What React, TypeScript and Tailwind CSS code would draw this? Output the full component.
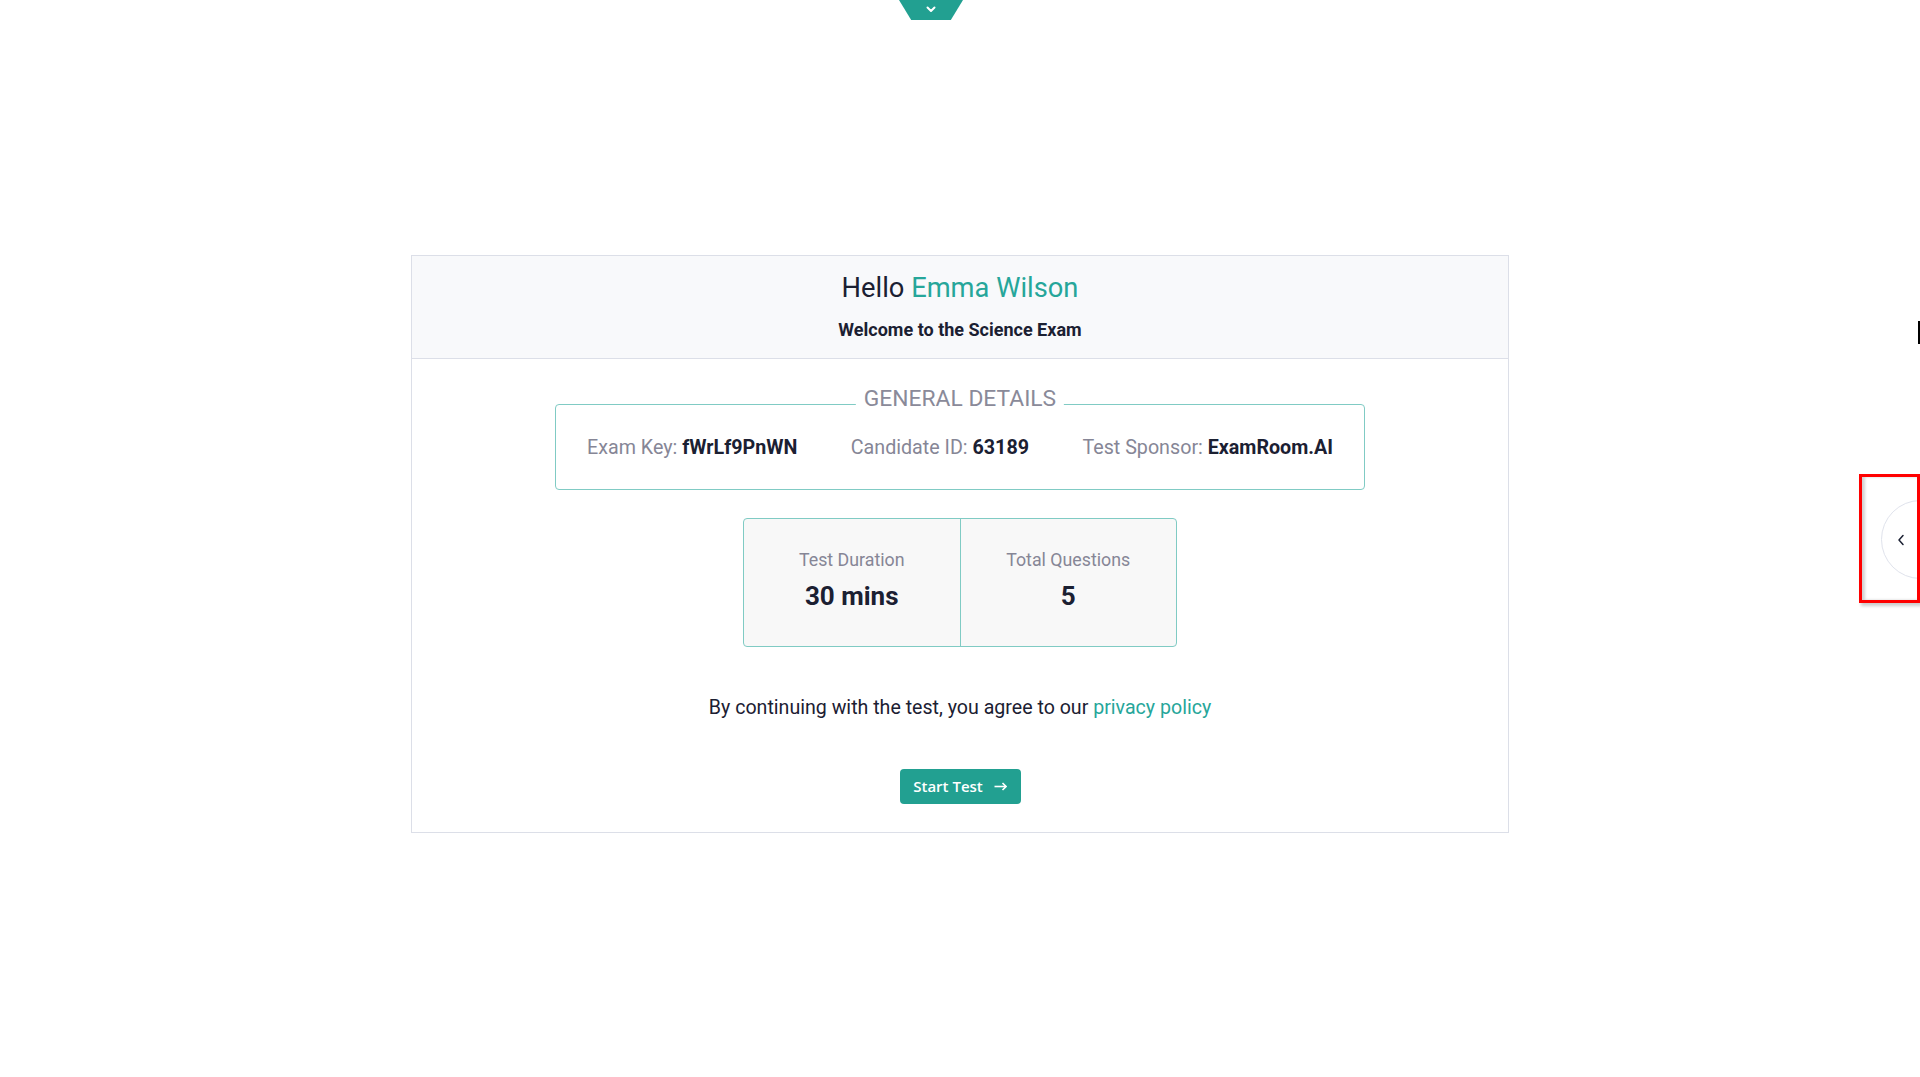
import React from "react";

export default function App() {
  return (
    <div className="relative min-h-[1077px] w-full overflow-hidden bg-white font-['Roboto',sans-serif] text-[#1b2032]">
      <div className="flex flex-col items-center">
        {/* top pull tab */}
        <div className="mr-[58px] flex h-[20px] w-[64px] items-start justify-center bg-[#22a091] pt-[6px] [clip-path:polygon(0_0,100%_0,81%_100%,19%_100%)]">
          <svg width="10" height="7" viewBox="0 0 10 7" fill="none">
            <polyline points="1.5,1.5 5,5 8.5,1.5" stroke="white" strokeWidth="2" strokeLinecap="round" strokeLinejoin="round" />
          </svg>
        </div>

        {/* card */}
        <div className="mt-[235px] w-[1098px] border border-[#dcdfe8]">
          <div className="flex h-[103px] flex-col items-center border-b border-[#dcdfe8] bg-[#f8f9fb] pt-[15px]">
            <h1 className="text-[27.3px] leading-[34px] text-[#1b2032]">
              Hello <span className="text-[#26a69a]">Emma Wilson</span>
            </h1>
            <p className="mt-[13px] text-[18px] font-bold leading-[24px] text-[#1b2032]">
              Welcome to the Science Exam
            </p>
          </div>

          <div className="flex flex-col items-center pb-[28px] pt-[45px]">
            <div className="relative flex h-[86px] w-[810px] items-center justify-between rounded-[4px] border border-[#80cbc4] px-[31px] pt-[2px] text-[19.7px] leading-[24px]">
              <span className="absolute left-1/2 top-[-17px] -translate-x-1/2 bg-white px-[8px] text-[22.8px] leading-none text-[#8a8a99]">
                GENERAL DETAILS
              </span>
              <span className="text-[#868696]">
                Exam Key: <b className="font-bold text-[#1b2032]">fWrLf9PnWN</b>
              </span>
              <span className="text-[#868696]">
                Candidate ID: <b className="font-bold text-[#1b2032]">63189</b>
              </span>
              <span className="text-[#868696]">
                Test Sponsor: <b className="font-bold text-[#1b2032]">ExamRoom.AI</b>
              </span>
            </div>

            <div className="mt-[28px] flex h-[129px] w-[434px] rounded-[4px] border border-[#80cbc4] bg-[#f8f8f8]">
              <div className="flex flex-1 flex-col items-center border-r border-[#80cbc4] pt-[29px]">
                <span className="text-[17.8px] leading-[24px] text-[#868696]">Test Duration</span>
                <span className="mt-[8px] text-[26px] font-bold leading-[32px] text-[#1b2032]">30 mins</span>
              </div>
              <div className="flex flex-1 flex-col items-center pt-[29px]">
                <span className="text-[17.8px] leading-[24px] text-[#868696]">Total Questions</span>
                <span className="mt-[8px] text-[26px] font-bold leading-[32px] text-[#1b2032]">5</span>
              </div>
            </div>

            <p className="mt-[47px] text-[19.6px] leading-[28px] text-[#1b2032]">
              By continuing with the test, you agree to our{" "}
              <a className="text-[#26a69a]">privacy policy</a>
            </p>

            <button className="mt-[47px] flex h-[35px] w-[121px] items-center justify-center gap-[11px] rounded-[4px] bg-[#22a091] font-['Open_Sans',sans-serif] text-[15px] font-semibold text-white">
              <span>Start Test</span>
              <svg width="13" height="9" viewBox="0 0 13 9" fill="none">
                <line x1="0.5" y1="4.5" x2="12" y2="4.5" stroke="white" strokeWidth="1.6" />
                <polyline points="8.5,1 12,4.5 8.5,8" stroke="white" strokeWidth="1.6" fill="none" />
              </svg>
            </button>
          </div>
        </div>
      </div>

      {/* text cursor at right edge */}
      <div className="absolute right-0 top-[321px] h-[23px] w-[2px] bg-black" />

      {/* side toggle with highlight */}
      <div className="absolute right-0 top-[474px] h-[129px] w-[61px] overflow-hidden border-[3px] border-[#ff0000] shadow-[inset_3px_0_3px_rgba(0,0,0,0.18),2px_3px_3px_rgba(0,0,0,0.2)]">
        <div className="absolute left-[19px] top-[23px] flex h-[79px] w-[79px] items-center rounded-full border border-[#e0e3ec] bg-white pl-[15px]">
          <svg width="8" height="12" viewBox="0 0 8 12" fill="none">
            <polyline points="6,1.5 2,6 6,10.5" stroke="#1b2032" strokeWidth="1.5" strokeLinecap="round" strokeLinejoin="round" />
          </svg>
        </div>
      </div>
    </div>
  );
}
